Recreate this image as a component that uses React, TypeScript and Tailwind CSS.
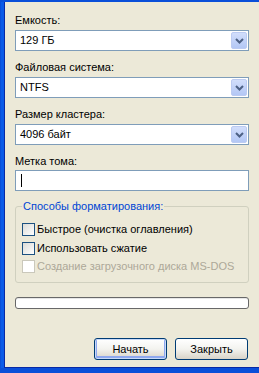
import React from 'react';

const font = { fontFamily: '"Liberation Sans", Arial, sans-serif' };

const Chevron: React.FC = () => (
  <svg width="9" height="6" viewBox="0 0 9 6">
    <path d="M1 1 L4.5 4.5 L8 1" fill="none" stroke="#4d6185" strokeWidth="2" />
  </svg>
);

const Select: React.FC<{ value: string }> = ({ value }) => (
  <div className="flex h-[21px] w-full items-center border border-[#7f9db9] bg-white pl-[4px] pr-[1px]">
    <span className="flex-1 text-[11px] leading-[13px] text-black">{value}</span>
    <div className="flex h-[17px] w-[16px] items-center justify-center rounded-[2px] border border-[#bccbf2] bg-gradient-to-b from-[#d2defb] to-[#b3c7f5]">
      <Chevron />
    </div>
  </div>
);

const Label: React.FC<{ text: string; className?: string }> = ({ text, className }) => (
  <div className={`h-[13px] text-[11px] leading-[13px] text-black ${className ?? ''}`}>{text}</div>
);

const Checkbox: React.FC<{ label: string; disabled?: boolean; className?: string }> = ({ label, disabled, className }) => (
  <div className={`flex h-[13px] items-center gap-[2px] ${className ?? ''}`}>
    <div
      className={
        disabled
          ? 'h-[13px] w-[13px] shrink-0 border border-[#cac8bb] bg-white'
          : 'h-[13px] w-[13px] shrink-0 border border-[#1c5180] bg-gradient-to-br from-[#dcdcd7] to-white'
      }
    />
    <span className={`whitespace-nowrap text-[11px] leading-[13px] ${disabled ? 'text-[#aca899]' : 'text-black'}`}>{label}</span>
  </div>
);

const Button: React.FC<{ text: string; primary?: boolean }> = ({ text, primary }) => (
  <div
    className={`flex h-[22px] w-[73px] items-center justify-center rounded-[3px] border border-[#003c74] bg-gradient-to-b from-white via-[#f3f3ef] to-[#d8d3c8] text-[11px] leading-[13px] text-black ${
      primary ? 'shadow-[inset_0_0_0_1px_#c9daf8,inset_0_-1px_0_2px_#8fa8ef]' : ''
    }`}
  >
    {text}
  </div>
);

const App: React.FC = () => {
  return (
    <div className="h-[373px] w-[259px] overflow-hidden bg-[#0a4fd9]" style={font}>
      <div className="ml-[1px] mt-[2px] h-[366px] border-l-[3px] border-[#0b5be8]">
        <div className="h-[366px] border-b border-l border-[#0829a5] bg-[#ece9d8] pl-[10px] pr-[10px]">
          <Label text="Емкость:" className="pt-[12px] h-[25px]" />
          <div className="mt-[3px]">
            <Select value="129 ГБ" />
          </div>
          <Label text="Файловая система:" className="mt-[10px]" />
          <div className="mt-[3px]">
            <Select value="NTFS" />
          </div>
          <Label text="Размер кластера:" className="mt-[10px]" />
          <div className="mt-[3px]">
            <Select value="4096 байт" />
          </div>
          <Label text="Метка тома:" className="mt-[10px]" />
          <div className="mt-[2px] flex h-[21px] items-center border border-[#7f9db9] bg-white pl-[5px]">
            <span className="h-[13px] w-[1px] bg-black" />
          </div>

          <fieldset className="mt-[9px] h-[83px] rounded-[3px] border border-[#d0d0bf] pl-[6px]">
            <legend className="px-[1px] text-[11px] leading-[13px] text-[#0046d5]">Способы форматирования:</legend>
            <Checkbox label="Быстрое (очистка оглавления)" className="mt-[10px]" />
            <Checkbox label="Использовать сжатие" className="mt-[6px]" />
            <Checkbox label="Создание загрузочного диска MS-DOS" disabled className="mt-[5px]" />
          </fieldset>

          <div className="mt-[14px] h-[12px] rounded-[3px] border border-[#686868] bg-white shadow-[inset_0_1px_0_#e6e6e6]" />

          <div className="mt-[29px] flex justify-end gap-[8px] pr-[1px]">
            <Button text="Начать" primary />
            <Button text="Закрыть" />
          </div>
        </div>
      </div>
    </div>
  );
};

export default App;
